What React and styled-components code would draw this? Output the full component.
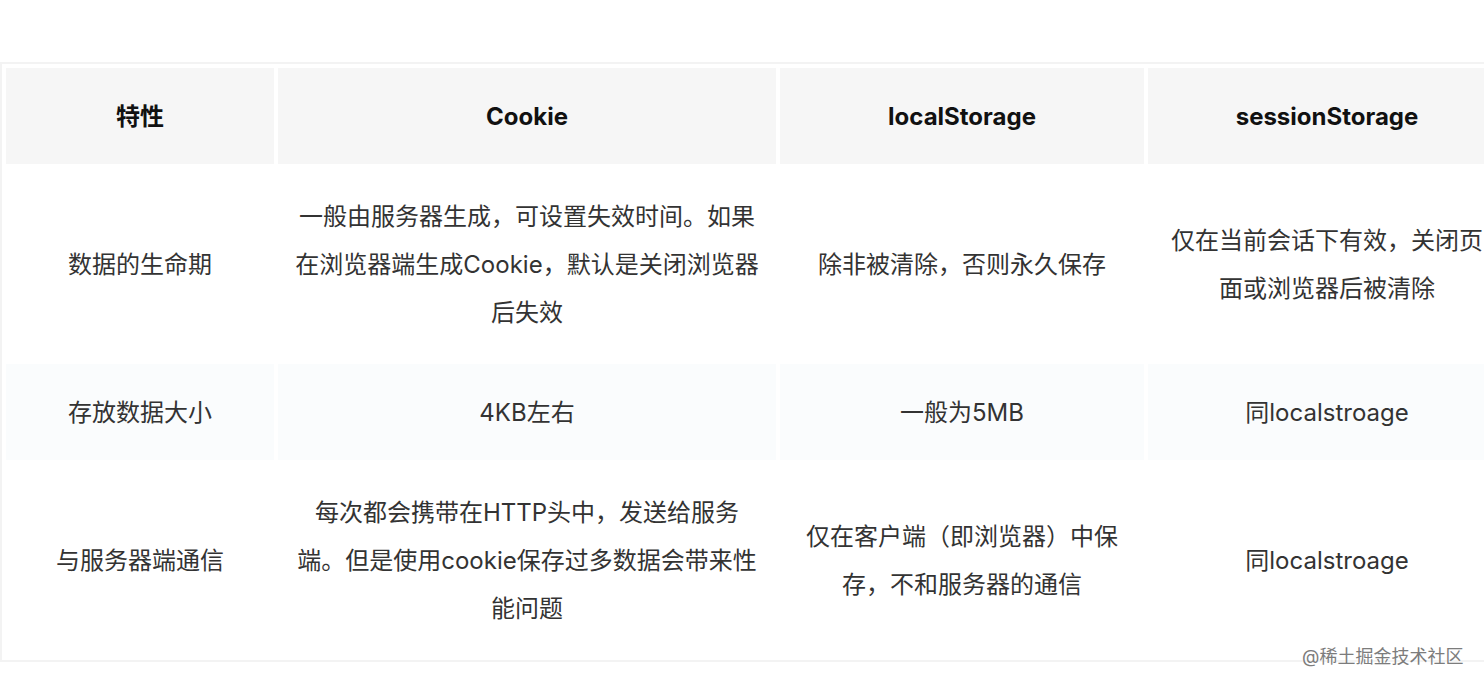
import React from 'react';
import styled, {createGlobalStyle} from 'styled-components';

const GlobalStyle = createGlobalStyle`
    html, body {
        margin: 0;
        padding: 0;
        background: #ffffff;
        overflow: hidden;
    }
    body {
        font-family: "Inter", "Noto Sans CJK SC", sans-serif;
    }
`;

const Page = styled.div`
    position: relative;
    width: 1484px;
    height: 688px;
    padding-top: 62px;
    box-sizing: border-box;
    overflow: hidden;
`;

const Table = styled.table`
    table-layout: fixed;
    width: 1512px;
    border: 2px solid #f3f3f3;
    border-collapse: separate;
    border-spacing: 4px;
    font-size: 24px;
    line-height: 48px;
`;

const HeadCell = styled.th`
    background: #f6f6f6;
    color: #111111;
    font-weight: 700;
    padding: 25px 16px 23px;
    text-align: center;
`;

const Row = styled.tr`
    background: ${props => props.striped ? '#fafcfd' : 'transparent'};
`;

const Cell = styled.td`
    color: #333333;
    padding: 25px 16px 23px;
    text-align: center;
    vertical-align: middle;
`;

const Watermark = styled.div`
    position: absolute;
    left: 1302px;
    top: 645px;
    font-size: 18px;
    line-height: 24px;
    color: #7c7c7c;
    text-shadow: 0 0 2px #ffffff;
    white-space: nowrap;
`;

const widths = [268, 498, 364, 358];

const headers = ['特性', 'Cookie', 'localStorage', 'sessionStorage'];

const rows = [
    [
        '数据的生命期',
        '一般由服务器生成，可设置失效时间。如果在浏览器端生成Cookie，默认是关闭浏览器后失效',
        '除非被清除，否则永久保存',
        '仅在当前会话下有效，关闭页面或浏览器后被清除',
    ],
    ['存放数据大小', '4KB左右', '一般为5MB', '同localstroage'],
    [
        '与服务器端通信',
        '每次都会携带在HTTP头中，发送给服务端。但是使用cookie保存过多数据会带来性能问题',
        '仅在客户端（即浏览器）中保存，不和服务器的通信',
        '同localstroage',
    ],
];

export default () => {
    return (
        <>
            <GlobalStyle />
            <Page>
                <Table>
                    <colgroup>
                        {widths.map((w, i) => <col key={i} style={{width: w}} />)}
                    </colgroup>
                    <thead>
                        <tr>
                            {headers.map(h => <HeadCell key={h}>{h}</HeadCell>)}
                        </tr>
                    </thead>
                    <tbody>
                        {rows.map((row, i) => (
                            <Row key={i} striped={i % 2 === 1}>
                                {row.map((text, j) => <Cell key={j}>{text}</Cell>)}
                            </Row>
                        ))}
                    </tbody>
                </Table>
                <Watermark>@稀土掘金技术社区</Watermark>
            </Page>
        </>
    )
}
